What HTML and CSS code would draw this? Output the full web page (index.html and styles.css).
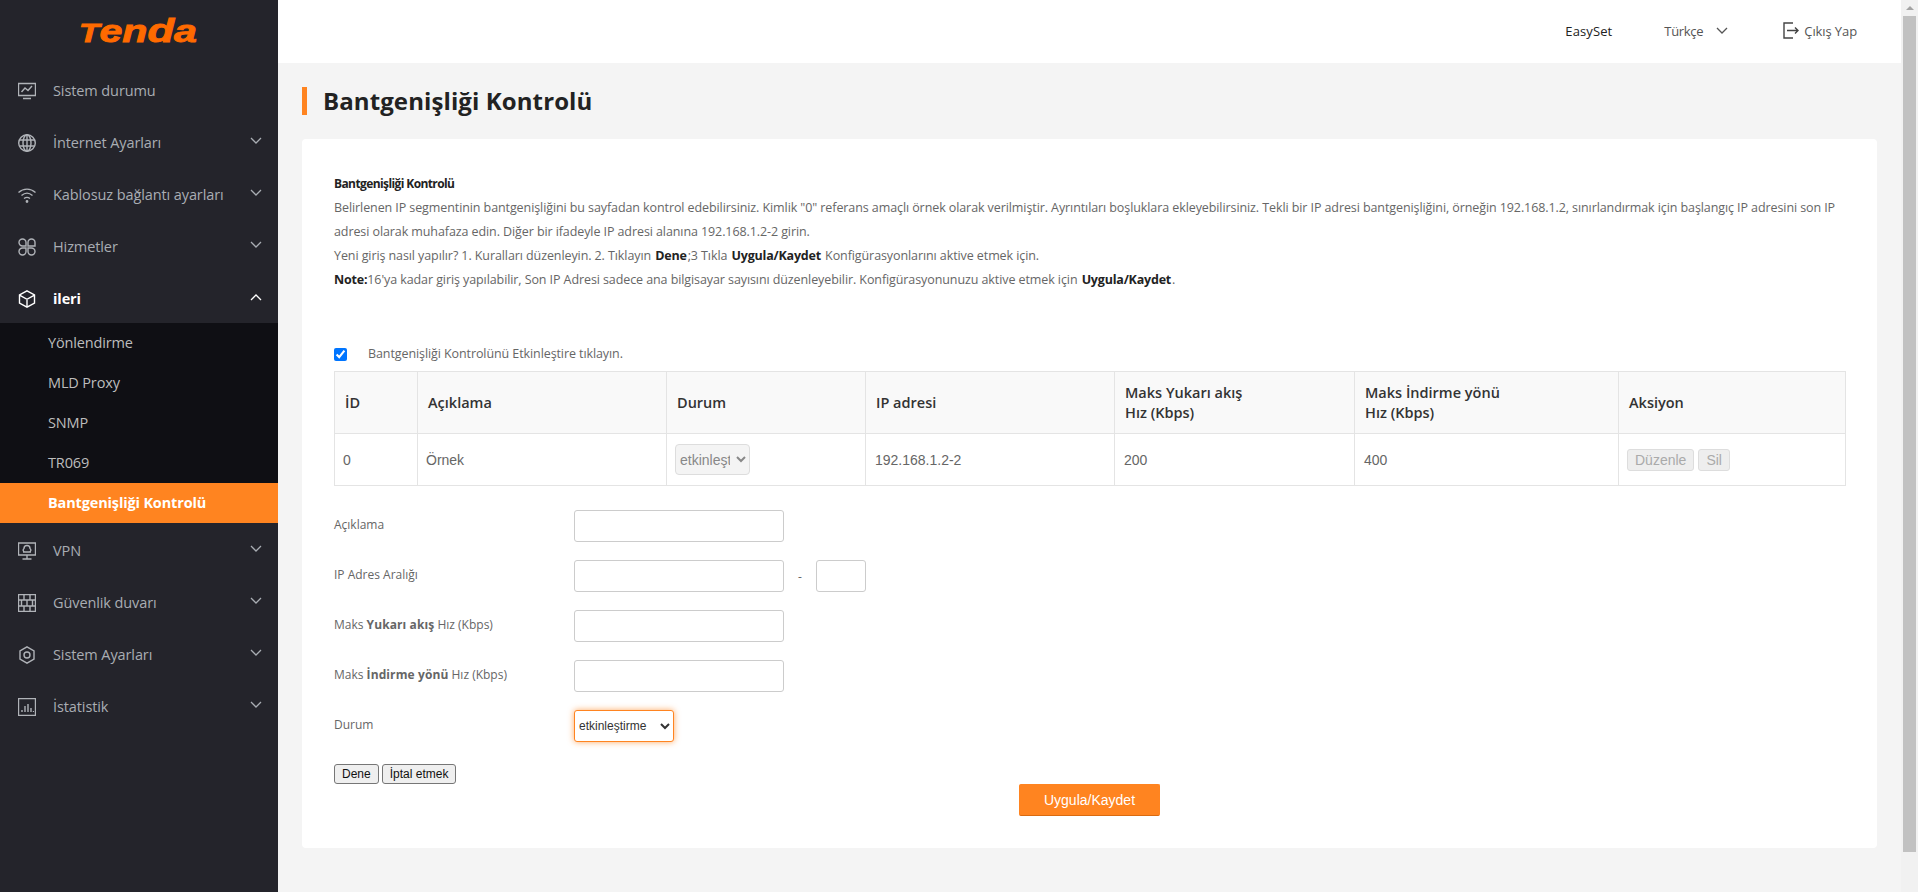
FILE: index.html
```html
<!DOCTYPE html>
<html lang="tr">
<head>
    <meta charset="UTF-8">
    <title>Bantgenişliği Kontrolü</title>
    <link rel="stylesheet" href="styles.css">
</head>
<body>
    <svg class="defs" width="0" height="0">
        <symbol id="chev" viewBox="0 0 12 8"><path d="M1 1l5 5 5-5" fill="none" stroke="currentColor" stroke-width="1.3"/></symbol>
    </svg>
    <div class="sidebar">
        <div class="logo">
            <svg width="150" height="48" viewBox="0 0 150 48"><text class="logo-text" x="16" y="35" textLength="118" lengthAdjust="spacingAndGlyphs"><tspan class="logo-cap">T</tspan>en<tspan class="logo-tall">d</tspan>a</text></svg>
        </div>
        <a class="nav-item">
            <svg class="nav-icon" viewBox="0 0 18 18"><path d="M.5 1.500h17v12H.5zM5 16.500h8M3.500 10l3.500-4 3 2.500 4-4.500"/></svg>
            <span>Sistem durumu</span>
        </a>
        <a class="nav-item">
            <svg class="nav-icon" viewBox="0 0 18 18"><circle cx="9" cy="9" r="8.300"/><ellipse cx="9" cy="9" rx="4" ry="8.300"/><path d="M9 .7v16.600M1.500 6h15M1.500 12h15"/></svg>
            <span>İnternet Ayarları</span>
            <svg class="chev"><use href="#chev"/></svg>
        </a>
        <a class="nav-item">
            <svg class="nav-icon" viewBox="0 0 18 18"><path d="M.5 6.500c5-4.500 12-4.500 17 0M3.500 9.500c3.500-3 7.500-3 11 0M6 12.500c2-1.500 4-1.500 6 0"/><circle cx="9" cy="15.500" r=".7"/></svg>
            <span>Kablosuz bağlantı ayarları</span>
            <svg class="chev"><use href="#chev"/></svg>
        </a>
        <a class="nav-item">
            <svg class="nav-icon" viewBox="0 0 18 18"><path d="M1 4.500a3.500 3.500 0 0 1 7 0V8H4.500A3.500 3.500 0 0 1 1 4.500zM10 4.500a3.500 3.500 0 0 1 7 0V8h-7zM1 13.500A3.500 3.500 0 0 1 4.500 10H8v3.500a3.500 3.500 0 0 1-7 0zM10 10h3.500a3.500 3.500 0 0 1 0 7A3.500 3.500 0 0 1 10 13.500z"/></svg>
            <span>Hizmetler</span>
            <svg class="chev"><use href="#chev"/></svg>
        </a>
        <a class="nav-item open">
            <svg class="nav-icon" viewBox="0 0 18 18"><path d="M9 .8l7.500 4.200v8L9 17.200 1.500 13V5zM2 5.300l7 4 7-4M9 9.300v7.500"/></svg>
            <span>ileri</span>
            <svg class="chev up"><use href="#chev"/></svg>
        </a>
        <div class="sub-menu">
            <a class="sub-item">Yönlendirme</a>
            <a class="sub-item">MLD Proxy</a>
            <a class="sub-item">SNMP</a>
            <a class="sub-item">TR069</a>
            <a class="sub-item active">Bantgenişliği Kontrolü</a>
        </div>
        <a class="nav-item">
            <svg class="nav-icon" viewBox="0 0 18 18"><path d="M.5 1h17v12H.5zM9 13v4M4.500 17h9M5 10h8M6.500 10a2 2 0 0 1-.5-3.500 3 3 0 0 1 6 0 2 2 0 0 1-.5 3.500"/></svg>
            <span>VPN</span>
            <svg class="chev"><use href="#chev"/></svg>
        </a>
        <a class="nav-item">
            <svg class="nav-icon" viewBox="0 0 18 18"><path d="M.5.5h17v17H.5zM.5 6h17M.5 12h17M6 .5V6M12 .5V6M3.500 6v6M9 6v6M14.500 6v6M6 12v5.500M12 12v5.500"/></svg>
            <span>Güvenlik duvarı</span>
            <svg class="chev"><use href="#chev"/></svg>
        </a>
        <a class="nav-item">
            <svg class="nav-icon" viewBox="0 0 18 18"><path d="M9 .8l7 4.100v8.200l-7 4.100-7-4.100V4.900z"/><circle cx="9" cy="9" r="3"/></svg>
            <span>Sistem Ayarları</span>
            <svg class="chev"><use href="#chev"/></svg>
        </a>
        <a class="nav-item">
            <svg class="nav-icon" viewBox="0 0 18 18"><path d="M.5.5h17v17H.5zM4 14v-2M7 14V8M10 14V6M13 14v-4M15.500 14v-1"/></svg>
            <span>İstatistik</span>
            <svg class="chev"><use href="#chev"/></svg>
        </a>
    </div>

    <div class="main">
        <div class="top-bar">
            <a class="easyset">EasySet</a>
            <a class="lang">Türkçe <svg class="chev"><use href="#chev"/></svg></a>
            <a class="logout">
                <svg width="16" height="17" viewBox="0 0 16 17"><path d="M10 1H1v15h9M4 8.500h11M12 5.500l3 3-3 3" fill="none" stroke="#444" stroke-width="1.400"/></svg>
                Çıkış Yap
            </a>
        </div>
        <div class="content">
            <h1 class="page-title">Bantgenişliği Kontrolü</h1>
            <div class="card">
                <div class="notes">
                    <b class="notes-title">Bantgenişliği Kontrolü</b><br>
                    Belirlenen IP segmentinin bantgenişliğini bu sayfadan kontrol edebilirsiniz. Kimlik "0" referans amaçlı örnek olarak verilmiştir. Ayrıntıları boşluklara ekleyebilirsiniz. Tekli bir IP adresi bantgenişliğini, örneğin 192.168.1.2, sınırlandırmak için başlangıç IP adresini son IP adresi olarak muhafaza edin. Diğer bir ifadeyle IP adresi alanına 192.168.1.2-2 girin.<br>
                    Yeni giriş nasıl yapılır? 1. Kuralları düzenleyin. 2. Tıklayın <b>Dene</b>;3 Tıkla <b>Uygula/Kaydet</b> Konfigürasyonlarını aktive etmek için.<br>
                    <b class="note-label">Note:</b>16'ya kadar giriş yapılabilir, Son IP Adresi sadece ana bilgisayar sayısını düzenleyebilir. Konfigürasyonunuzu aktive etmek için <b>Uygula/Kaydet</b>.
                </div>
                <label class="enable-row">
                    <input type="checkbox" class="enable-check" checked>
                    <span>Bantgenişliği Kontrolünü Etkinleştire tıklayın.</span>
                </label>
                <table class="rules">
                    <colgroup>
                        <col class="c-id"><col class="c-desc"><col class="c-state"><col class="c-ip"><col class="c-up"><col class="c-down"><col class="c-act">
                    </colgroup>
                    <thead>
                        <tr>
                            <th>İD</th>
                            <th>Açıklama</th>
                            <th>Durum</th>
                            <th>IP adresi</th>
                            <th>Maks Yukarı akış<br>Hız (Kbps)</th>
                            <th>Maks İndirme yönü<br>Hız (Kbps)</th>
                            <th>Aksiyon</th>
                        </tr>
                    </thead>
                    <tbody>
                        <tr>
                            <td class="tight">0</td>
                            <td class="tight">Örnek</td>
                            <td class="tight"><select class="row-select" disabled><option>etkinleştirme</option></select></td>
                            <td>192.168.1.2-2</td>
                            <td>200</td>
                            <td>400</td>
                            <td class="tight"><button class="row-btn" disabled>Düzenle</button><button class="row-btn" disabled>Sil</button></td>
                        </tr>
                    </tbody>
                </table>
                <form class="rule-form">
                    <div class="form-group">
                        <label>Açıklama</label>
                        <input type="text" class="form-control">
                    </div>
                    <div class="form-group">
                        <label>IP Adres Aralığı</label>
                        <input type="text" class="form-control">
                        <span class="dash">-</span>
                        <input type="text" class="form-control short">
                    </div>
                    <div class="form-group">
                        <label>Maks <b>Yukarı akış</b> Hız (Kbps)</label>
                        <input type="text" class="form-control">
                    </div>
                    <div class="form-group">
                        <label>Maks <b>İndirme yönü</b> Hız (Kbps)</label>
                        <input type="text" class="form-control">
                    </div>
                    <div class="form-group">
                        <label>Durum</label>
                        <select class="state-select"><option>etkinleştirme</option></select>
                    </div>
                    <div class="form-buttons">
                        <button type="button" class="plain-btn">Dene</button>
                        <button type="button" class="plain-btn">İptal etmek</button>
                    </div>
                </form>
                <div class="save-row">
                    <button class="save-btn">Uygula/Kaydet</button>
                </div>
            </div>
        </div>
    </div>

    <div class="scrollbar">
        <div class="scroll-arrow"></div>
        <div class="scroll-thumb"></div>
    </div>
</body>
</html>
```

FILE: styles.css
```css
* {
    box-sizing: border-box;
}
html, body {
    margin: 0;
    height: 892px;
    overflow: hidden;
}
body {
    display: flex;
    font-family: "Open Sans", "Noto Sans", sans-serif;
    background-color: #f4f4f4;
    color: #666;
}
.defs {
    position: absolute;
}
.sidebar {
    width: 278px;
    flex: none;
    background-color: #24242b;
    color: #a9adb3;
}
.logo {
    height: 63px;
    padding: 7px 0 0 63px;
}
.logo svg {
    display: block;
}
.logo-text {
    font-family: "Liberation Sans", sans-serif;
    font-size: 32px;
    font-weight: bold;
    font-style: italic;
    fill: #ff6a00;
    stroke: #ff6a00;
    stroke-width: .9px;
}
.logo-cap {
    font-size: 26px;
}
.logo-tall {
    font-size: 34px;
}
.nav-item {
    display: flex;
    align-items: center;
    height: 52px;
    padding: 3px 16px 0 18px;
    font-size: 14.500px;
    letter-spacing: -.1px;
}
.nav-icon {
    width: 18px;
    height: 18px;
    margin-right: 17px;
    flex: none;
    fill: none;
    stroke: #b0b3b8;
    stroke-width: 1.400;
}
.nav-item .chev {
    margin: -4px 0 0 auto;
}
.chev {
    width: 12px;
    height: 8px;
    display: inline-block;
}
.chev.up {
    transform: rotate(180deg);
}
.nav-item.open {
    color: #fff;
    font-weight: 700;
}
.nav-item.open .nav-icon {
    stroke: #fff;
}
.sub-menu {
    background-color: #0f0f14;
}
.sub-item {
    display: flex;
    align-items: center;
    height: 40px;
    padding: 0 0 2px 48px;
    font-size: 14.500px;
    letter-spacing: -.15px;
    color: #bdbdbd;
}
.sub-item.active {
    background-color: #ff8420;
    color: #fff;
    font-weight: 700;
}
.main {
    flex: 1;
    min-width: 0;
}
.top-bar {
    height: 63px;
    background-color: #fff;
    display: flex;
    align-items: center;
    justify-content: flex-end;
    padding: 0 44px 2px 0;
    font-size: 13px;
    letter-spacing: -.1px;
    color: #555;
}
.easyset {
    color: #222;
    letter-spacing: .1px;
    margin-right: 52px;
}
.lang {
    display: flex;
    align-items: center;
    gap: 13px;
    margin-right: 55px;
    letter-spacing: -.3px;
}
.logout {
    display: flex;
    align-items: center;
    gap: 5px;
}
.content {
    padding: 24px 24px 0;
}
.page-title {
    margin: 0 0 24px;
    height: 28px;
    line-height: 28px;
    border-left: 5px solid #ff8420;
    padding-left: 16px;
    font-size: 24px;
    font-weight: 700;
    letter-spacing: .1px;
    color: #222;
}
.card {
    height: 709px;
    background-color: #fff;
    border-radius: 4px;
    padding: 33px 32px 0;
}
.notes {
    font-size: 12.500px;
    line-height: 24px;
    letter-spacing: -.09px;
    height: 119px;
}
.notes b {
    color: #222;
    letter-spacing: -.2px;
    margin: 0 1px;
}
.notes b.notes-title {
    font-size: 12px;
    letter-spacing: -.6px;
    margin: 0;
}
.notes b.note-label {
    margin: 0;
}
.enable-row {
    display: flex;
    align-items: center;
    height: 24px;
    margin-top: 52px;
    padding-bottom: 4px;
    font-size: 12.500px;
    letter-spacing: -.09px;
}
.enable-check {
    width: 13px;
    height: 13px;
    margin: 2px 21px 0 0;
}
.rules {
    width: 1511px;
    margin-top: 4px;
    table-layout: fixed;
    border-collapse: collapse;
    border: 1px solid #e4e4e4;
    border-top-color: #ddd;
}
.c-id { width: 83px; }
.c-desc { width: 249px; }
.c-state { width: 199px; }
.c-ip { width: 249px; }
.c-up { width: 240px; }
.c-down { width: 264px; }
.c-act { width: 227px; }
.rules th, .rules td {
    border: 1px solid #e4e4e4;
    text-align: left;
    padding: 0 0 0 10px;
}
.rules th {
    height: 62px;
    background-color: #f9f9f9;
    font-size: 14.500px;
    font-weight: 600;
    line-height: 20px;
    color: #333;
}
.rules td {
    height: 52px;
    font-family: "Liberation Sans", sans-serif;
    font-size: 14px;
    padding-left: 9px;
}
.rules td.tight {
    padding-left: 8px;
}
.row-select {
    width: 75px;
    height: 31px;
    font-family: "Liberation Sans", sans-serif;
    font-size: 14px;
    padding: 0 3px 0 0;
    background-color: #f4f4f4;
    border: 1px solid #ddd;
    border-radius: 4px;
    color: #888;
    opacity: 1;
}
.row-btn {
    height: 22px;
    padding: 0 7px;
    margin-right: 4px;
    font-family: "Liberation Sans", sans-serif;
    font-size: 14px;
    background-color: #eee;
    border: 1px solid #ddd;
    border-radius: 3px;
    color: #aaa;
}
.rule-form {
    margin-top: 24px;
}
.form-group {
    display: flex;
    align-items: center;
    height: 32px;
    margin-bottom: 18px;
}
.form-group label {
    width: 240px;
    padding-bottom: 4px;
    font-size: 12px;
}
.form-group label b {
    letter-spacing: .1px;
}
.form-control {
    width: 210px;
    height: 32px;
    border: 1px solid #ccc;
    border-radius: 3px;
    background-color: #fff;
}
.form-control.short {
    width: 50px;
}
.dash {
    width: 32px;
    text-align: center;
    font-size: 12px;
}
.state-select {
    width: 100px;
    height: 32px;
    padding: 0;
    font-family: "Liberation Sans", sans-serif;
    font-size: 12px;
    color: #333;
    background-color: #fff;
    border: 1px solid #ff8420;
    border-radius: 3px;
    box-shadow: 0 0 6px rgba(255, 132, 32, .7);
}
.form-buttons {
    display: flex;
    gap: 3px;
    margin-top: 22px;
}
.plain-btn {
    height: 20px;
    padding: 0 7px;
    font-family: "Liberation Sans", sans-serif;
    font-size: 12px;
    color: #111;
    background-color: #efefef;
    border: 1px solid #767676;
    border-radius: 3px;
}
.save-row {
    text-align: center;
}
.save-btn {
    display: inline-block;
    vertical-align: top;
    width: 141px;
    height: 32px;
    font-family: "Liberation Sans", sans-serif;
    font-size: 14px;
    color: #fff;
    background-color: #ff8420;
    border: 1px solid #ff8420;
    border-bottom-color: #d96a10;
    border-radius: 2px;
}
.scrollbar {
    width: 17px;
    flex: none;
    background-color: #f1f1f1;
}
.scroll-arrow {
    width: 0;
    margin: 6px auto 0;
    border: 4px solid transparent;
    border-top: 0;
    border-bottom: 4px solid #a3a3a3;
    height: 0;
}
.scroll-thumb {
    height: 836px;
    margin: 6px 2px 0;
    background-color: #c1c1c1;
}
```
